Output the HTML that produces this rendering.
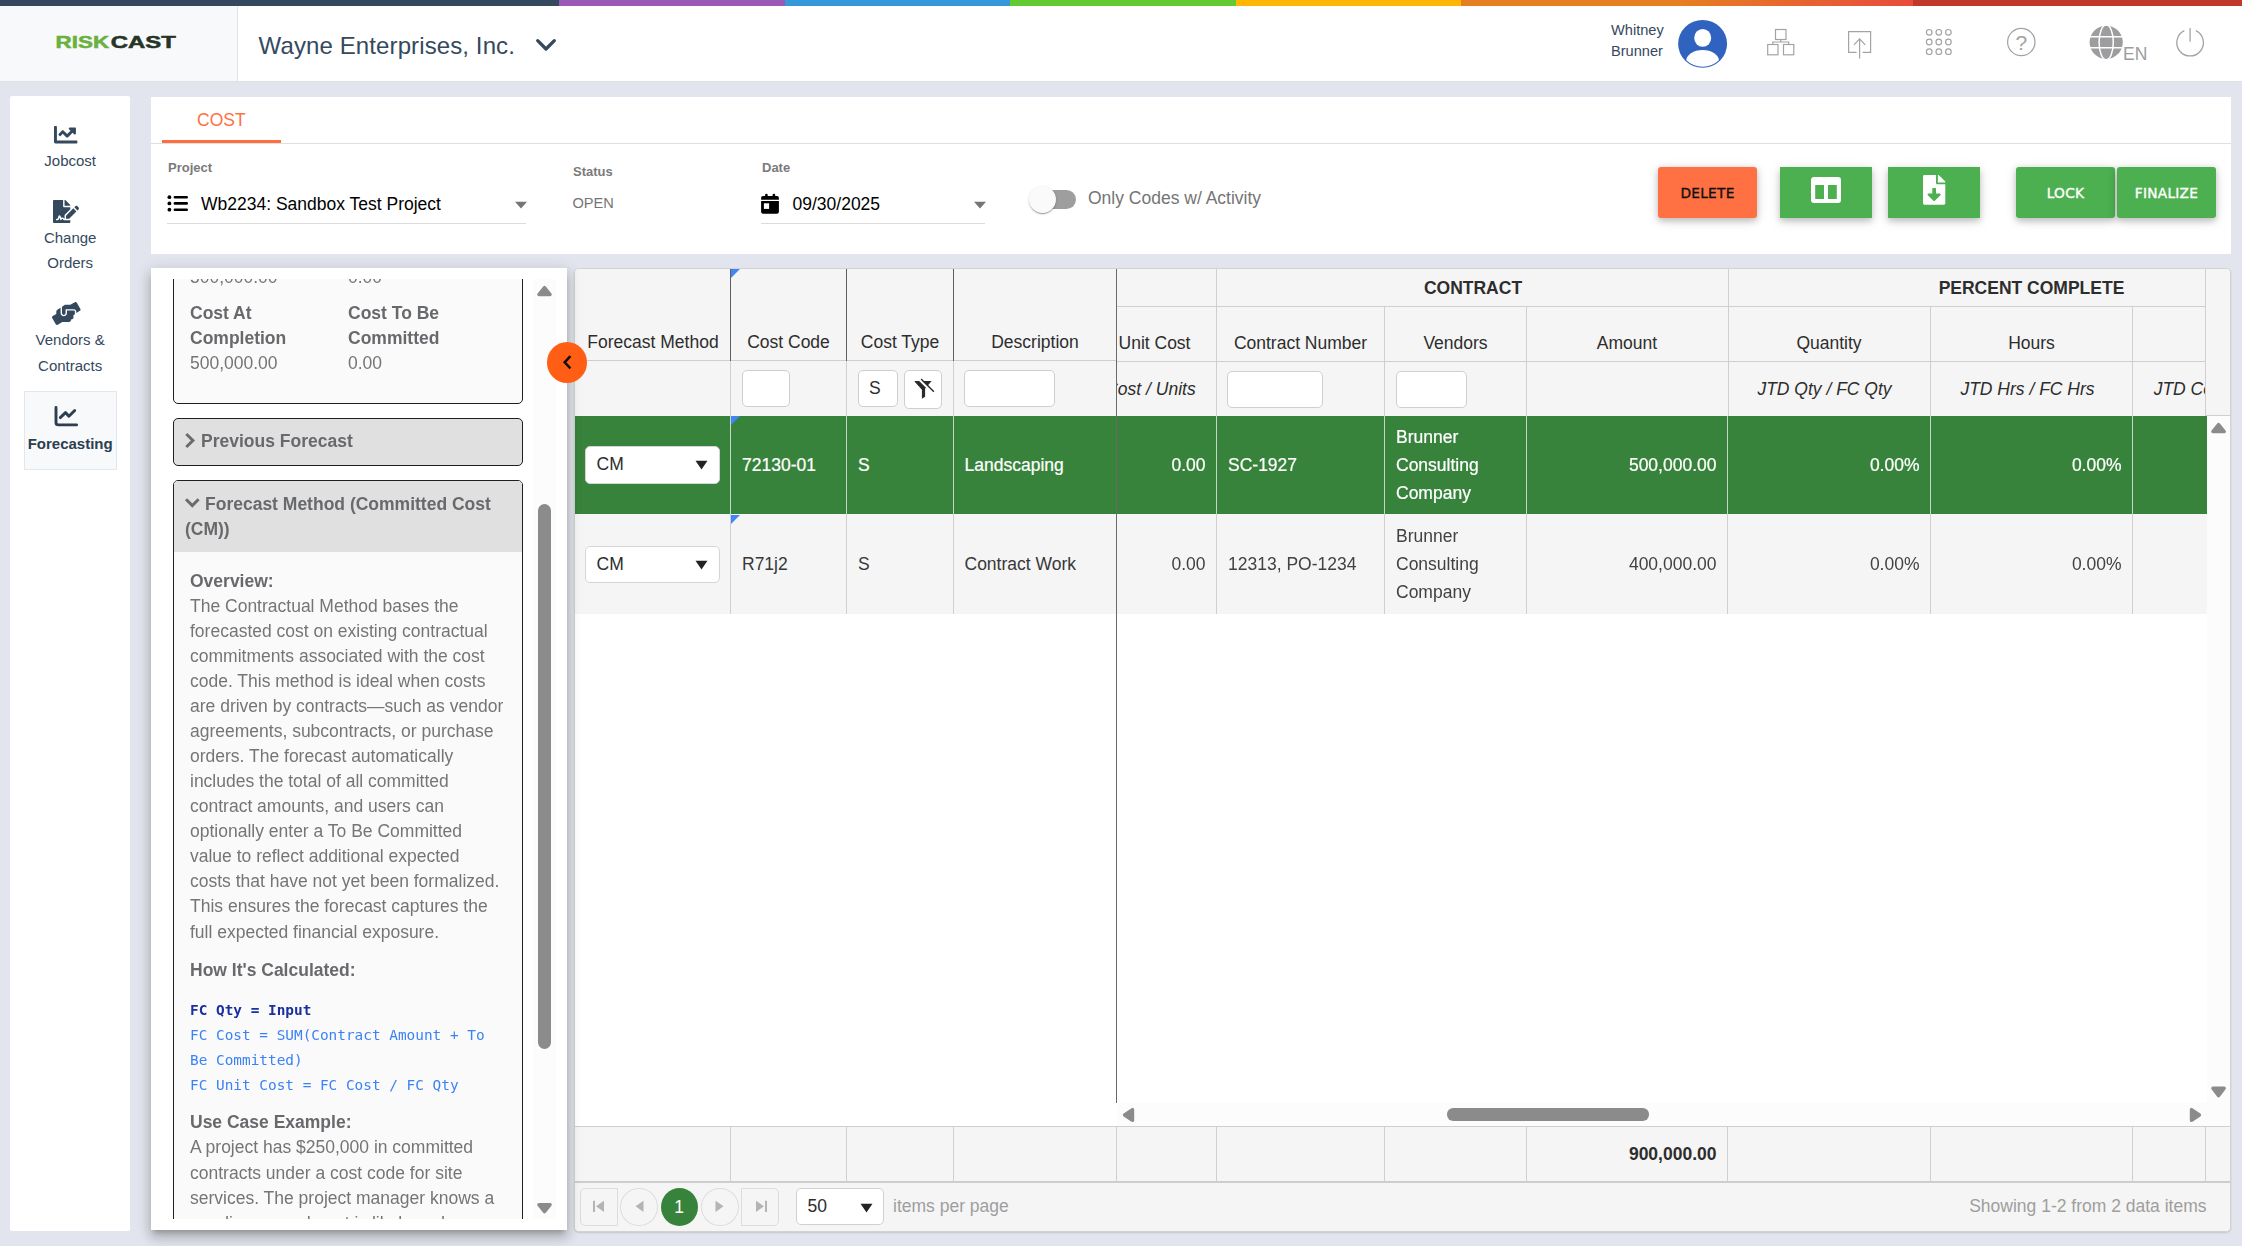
<!DOCTYPE html>
<html lang="en">
<head>
<meta charset="utf-8">
<title>RiskCast - Forecasting</title>
<style>
*{box-sizing:border-box;margin:0;padding:0}
html,body{width:2242px;height:1246px;overflow:hidden}
body{background:#e2e5ed;font-family:"Liberation Sans",sans-serif;font-size:17.5px;color:#212529;position:relative}
.abs{position:absolute}
.t{position:absolute;white-space:nowrap;line-height:1}
svg{position:absolute;overflow:visible}
/* top bar */
#rainbow{left:0;top:0;width:2242px;height:6px;background:linear-gradient(to right,#34495e 0,#34495e 559px,#9b59b6 559px,#9b59b6 785px,#3498db 785px,#3498db 1010px,#62cb31 1010px,#62cb31 1236px,#ffb606 1236px,#ffb606 1461px,#e67e22 1461px,#e67e22 1683px,#e74c3c 1913px,#c0392b 1913px,#c0392b 2242px)}
#header{left:0;top:6px;width:2242px;height:76px;background:#fff;border-bottom:1px solid #e0e1e5}
#logo{left:0;top:6px;width:238px;height:75px;background:#f8f9fb;border-right:1px solid #e1e4ec}
/* sidebar */
#side{left:10px;top:96px;width:120px;height:1135px;background:#fff;border-radius:2px}
.nav{color:#34495e;font-size:15px;text-align:center;left:10.200px;width:120px;line-height:25px}
/* card */
#card{left:151px;top:97px;width:2080px;height:157px;background:#fff}
.lbl{font-size:13px;font-weight:bold;color:#7a7a7a}
.btn{border-radius:3px;box-shadow:0 2.5px 6px rgba(0,0,0,.18),0 2.5px 12px rgba(0,0,0,.13);font-family:"DejaVu Sans","Liberation Sans",sans-serif;font-size:13.75px;text-align:center;line-height:53px;height:51px;top:167px;letter-spacing:.25px;-webkit-text-stroke:.35px currentColor}
.g{background:#4caf50;color:#fff}
</style>
</head>
<body>
<div class="abs" id="rainbow"></div>
<div class="abs" id="header"></div>
<div class="abs" id="logo"></div>
<!--HEADER-->
<svg class="abs" style="left:0;top:0" width="238" height="81" viewBox="0 0 238 81">
<text x="55.600" y="47.900" font-family="Liberation Sans, sans-serif" font-weight="bold" font-size="15.900" textLength="53.5" lengthAdjust="spacingAndGlyphs" fill="#6bb13f" stroke="#6bb13f" stroke-width=".5">RISK</text>
<text x="110.800" y="47.900" font-family="Liberation Sans, sans-serif" font-weight="bold" font-size="15.900" textLength="65" lengthAdjust="spacingAndGlyphs" fill="#263426" stroke="#263426" stroke-width=".5">CAST</text>
</svg>
<div class="t" style="left:258.600px;top:33px;font-size:24px;line-height:26px;color:#34495e;letter-spacing:.11px">Wayne Enterprises, Inc.</div>
<svg style="left:534px;top:36px" width="24" height="18" viewBox="0 0 24 18"><path d="M3.700 4.700 L12 13 L20.300 4.700" fill="none" stroke="#34495e" stroke-width="3.300" stroke-linecap="round" stroke-linejoin="round"/></svg>
<div class="t" style="left:1611px;top:20px;font-size:14.600px;line-height:21px;color:#34495e">Whitney<br>Brunner</div>
<svg style="left:1677px;top:19px" width="51" height="51" viewBox="0 0 51 51">
<defs><clipPath id="av"><ellipse cx="25.600" cy="24.800" rx="23.500" ry="22.900"/></clipPath></defs>
<ellipse cx="25.600" cy="24.800" rx="24.500" ry="23.900" fill="#3063bf"/>
<ellipse cx="25.700" cy="18.900" rx="8.500" ry="8.900" fill="#fff"/>
<ellipse cx="25.600" cy="41.700" rx="16.400" ry="10.600" fill="#fff" clip-path="url(#av)"/>
</svg>
<!-- org icon -->
<svg style="left:1760px;top:20px" width="50" height="50" viewBox="0 0 50 50" fill="none" stroke="#a3a3a3" stroke-width="1.2">
<rect x="15.5" y="9.500" width="10.5" height="10"/>
<rect x="7.700" y="24.500" width="10.300" height="10.300"/>
<rect x="23.500" y="24.500" width="10.300" height="10.300"/>
<path d="M20.800 19.500 V22 M12.800 24.500 V22 H28.700 V24.500"/>
</svg>
<!-- upload icon -->
<svg style="left:1840px;top:20px" width="40" height="50" viewBox="0 0 40 50" fill="none" stroke="#a3a3a3" stroke-width="1.2">
<path d="M16.500 32.300 H8.600 V11.700 H30.600 V32.300 H22.700"/>
<path d="M19.600 38.600 V18.800 M14 24.800 L19.600 18.800 L25.200 24.800"/>
</svg>
<!-- apps icon -->
<svg style="left:1910px;top:20px" width="60" height="50" viewBox="0 0 60 50" fill="none" stroke="#a3a3a3" stroke-width="1.2">
<circle cx="19.200" cy="12.300" r="2.800"/><circle cx="28.800" cy="12.300" r="2.800"/><circle cx="38.400" cy="12.300" r="2.800"/>
<circle cx="19.200" cy="22" r="2.800"/><circle cx="28.800" cy="22" r="2.800"/><circle cx="38.400" cy="22" r="2.800"/>
<circle cx="19.200" cy="31.700" r="2.800"/><circle cx="28.800" cy="31.700" r="2.800"/><circle cx="38.400" cy="31.700" r="2.800"/>
</svg>
<!-- help icon -->
<svg style="left:2000px;top:20px" width="44" height="50" viewBox="0 0 44 50">
<circle cx="21.300" cy="22" r="13.700" fill="none" stroke="#a3a3a3" stroke-width="1.200"/>
<text x="21.300" y="29.700" text-anchor="middle" font-family="Liberation Sans, sans-serif" font-size="21" fill="#a3a3a3">?</text>
</svg>
<!-- globe -->
<svg style="left:2080px;top:20px" width="70" height="50" viewBox="0 0 70 50">
<circle cx="26.200" cy="22.300" r="16.600" fill="#9d9da0"/>
<g fill="none" stroke="#fff" stroke-width="1.500">
<path d="M8 16.800 H45 M8 27.700 H45"/>
<ellipse cx="26.200" cy="22.300" rx="7.100" ry="17.500"/>
</g>
<text x="43" y="39.600" font-family="Liberation Sans, sans-serif" font-size="17.5" fill="#9d9da0">EN</text>
</svg>
<!-- power -->
<svg style="left:2170px;top:20px" width="44" height="50" viewBox="0 0 44 50" fill="none" stroke="#a3a3a3" stroke-width="1.300">
<path d="M14.300 10.700 A13.300 13.300 0 1 0 25.900 10.700"/>
<path d="M20.100 8 V21.700"/>
</svg>
<!--/HEADER-->
<div class="abs" id="side"></div>
<!--SIDE-->
<svg style="left:54.4px;top:122.600px" width="23.4" height="23.4" viewBox="0 0 512 512"><path fill="#34495e" d="M496 384H64V80c0-8.840-7.160-16-16-16H16C7.160 64 0 71.160 0 80v336c0 17.670 14.330 32 32 32h464c8.840 0 16-7.160 16-16v-32c0-8.840-7.160-16-16-16zM464 96H345.940c-21.380 0-32.090 25.850-16.970 40.970l32.400 32.400L288 242.750l-73.370-73.370c-12.500-12.500-32.760-12.500-45.250 0l-68.690 68.690c-6.250 6.250-6.250 16.380 0 22.630l22.620 22.620c6.250 6.250 16.380 6.250 22.630 0L192 237.250l73.370 73.370c12.500 12.500 32.760 12.500 45.250 0l96-96 32.400 32.400c15.120 15.120 40.970 4.410 40.970-16.970V112c.010-8.840-7.150-16-15.990-16z"/></svg>
<div class="t nav" style="top:148px">Jobcost</div>
<svg style="left:53px;top:200.2px" width="26" height="23.100" viewBox="0 0 576 512"><path fill="#34495e" d="M218.170 424.140c-2.950-5.920-8.090-6.520-10.170-6.520s-7.220.590-10.020 6.190l-7.670 15.340c-6.370 12.780-25.030 11.370-29.480-2.090L144 386.590l-10.610 31.880c-5.890 17.660-22.380 29.530-41 29.530H80c-8.840 0-16-7.160-16-16s7.160-16 16-16h12.390c4.830 0 9.110-3.080 10.640-7.660l18.190-54.640c3.300-9.810 12.440-16.410 22.780-16.410s19.480 6.590 22.770 16.410l13.880 41.640c19.750-16.190 54.060-9.700 66 14.160 1.890 3.780 5.490 5.950 9.360 6.260v-82.120l128-127.090V160H248c-13.200 0-24-10.800-24-24V0H24C10.700 0 0 10.700 0 24v464c0 13.300 10.700 24 24 24h336c13.300 0 24-10.700 24-24v-40l-128-.110c-16.120-.310-30.580-9.280-37.830-23.750zM384 121.900c0-6.300-2.500-12.400-7-16.900L279.100 7c-4.500-4.500-10.600-7-17-7H256v128h128v-6.100zm-96 225.060V416h68.990l161.680-162.780-67.880-67.880L288 346.960zm280.540-179.630l-31.870-31.870c-9.940-9.940-26.070-9.940-36.010 0l-27.250 27.250 67.880 67.880 27.250-27.250c9.950-9.940 9.950-26.070 0-36.010z"/></svg>
<div class="t nav" style="top:225px">Change<br>Orders</div>
<svg style="left:52px;top:301.600px" width="28.600" height="22.900" viewBox="0 0 640 512"><path fill="#34495e" d="M488 192H336v56c0 39.700-32.300 72-72 72s-72-32.300-72-72V126.400l-64.900 39C107.800 176.900 96 197.800 96 220.200v47.300l-80 46.200C.7 322.500-4.600 342.100 4.300 357.400l80 138.600c8.800 15.300 28.400 20.500 43.700 11.700L231.400 448H368c35.300 0 64-28.700 64-64h16c17.700 0 32-14.300 32-32v-64h8c13.300 0 24-10.700 24-24v-48c0-13.300-10.700-24-24-24zm147.700-37.400L555.700 16C546.900.7 527.300-4.500 512 4.300L408.600 64H306.400c-12 0-23.700 3.400-33.900 9.700L239 94.600c-9.400 5.800-15 16.100-15 27.100V248c0 22.100 17.900 40 40 40s40-17.900 40-40v-88h184c30.900 0 56 25.100 56 56v28.500l80-46.200c15.300-8.900 20.500-28.400 11.700-43.700z"/></svg>
<div class="t nav" style="top:327px;line-height:26px">Vendors &amp;<br>Contracts</div>
<div class="abs" style="left:24px;top:391px;width:93px;height:79px;background:#f8f9fb;border:1px solid #e3e6ec"></div>
<svg style="left:48px;top:400px" width="40" height="32" viewBox="0 0 40 32" fill="none" stroke="#2c3e50" stroke-width="2.900" stroke-linecap="round" stroke-linejoin="round">
<path d="M8 7.400 V22.500 Q8 24.900 10.400 24.900 H28.600"/>
<path d="M12.300 17.600 L17.500 12.600 L20.900 16.300 L26.700 10.500"/>
</svg>
<div class="t nav" style="top:431px;font-weight:bold;color:#2c3e50">Forecasting</div>

<!--/SIDE-->
<div class="abs" id="card"></div>
<!--CARD-->
<div class="t" style="left:197px;top:111px;font-size:17.5px;line-height:18px;color:#ff7043">COST</div>
<div class="abs" style="left:151px;top:143px;width:2080px;height:1px;background:#e0e0e0"></div>
<div class="abs" style="left:162px;top:140px;width:119px;height:3px;background:#ff6e40"></div>
<div class="t lbl" style="left:168px;top:160.500px;line-height:14px">Project</div>
<svg style="left:160px;top:185px" width="40" height="35" viewBox="0 0 40 35">
<g fill="#000"><circle cx="9.400" cy="12.200" r="1.900"/><circle cx="9.400" cy="18.400" r="1.900"/><circle cx="9.400" cy="24.700" r="1.900"/></g>
<path d="M14.900 12.200 H26.700 M14.900 18.400 H26.700 M14.900 24.700 H26.700" stroke="#000" stroke-width="2.600" stroke-linecap="round" fill="none"/>
</svg>
<div class="t" style="left:201px;top:194px;font-size:17.5px;line-height:20px;color:#000">Wb2234: Sandbox Test Project</div>
<svg style="left:514px;top:201px" width="14" height="8" viewBox="0 0 14 8"><path d="M1 .7 H13 L7 7.500 Z" fill="#757575"/></svg>
<div class="abs" style="left:167px;top:223px;width:359px;height:1px;background:#dcdcdc"></div>
<div class="t lbl" style="left:573px;top:165px;line-height:14px">Status</div>
<div class="t" style="left:572.500px;top:194px;font-size:14.600px;line-height:18px;color:#757575">OPEN</div>
<div class="t lbl" style="left:762px;top:160.500px;line-height:14px">Date</div>
<svg style="left:750px;top:185px" width="50" height="35" viewBox="0 0 50 35">
<path fill="#000" d="M11.100 12.900 Q11.100 11 13 11 H27 Q28.900 11 28.900 12.900 V14.700 H11.100 Z M11.100 16 H28.900 V26.800 Q28.900 28.800 26.900 28.800 H13.100 Q11.100 28.800 11.100 26.800 Z"/>
<rect x="15.100" y="8.700" width="2.600" height="4" rx="1.200" fill="#000"/><rect x="22.600" y="8.700" width="2.600" height="4" rx="1.200" fill="#000"/>
<rect x="13.900" y="18.300" width="5.200" height="5.600" fill="#fff"/>
</svg>
<div class="t" style="left:792.5px;top:194px;font-size:17.5px;line-height:20px;color:#000">09/30/2025</div>
<svg style="left:973px;top:201px" width="14" height="8" viewBox="0 0 14 8"><path d="M1 .7 H13 L7 7.500 Z" fill="#757575"/></svg>
<div class="abs" style="left:761px;top:223px;width:224px;height:1px;background:#dcdcdc"></div>
<div class="abs" style="left:1034px;top:190px;width:42px;height:19px;border-radius:10px;background:#9e9e9e"></div>
<div class="abs" style="left:1029px;top:186px;width:27px;height:27px;border-radius:50%;background:#fafafa;box-shadow:0 2px 1px -1px rgba(0,0,0,.2),0 1px 1px rgba(0,0,0,.14),0 1px 3px rgba(0,0,0,.14)"></div>
<div class="t" style="left:1088px;top:188px;font-size:17.5px;line-height:20px;color:#757575">Only Codes w/ Activity</div>
<div class="abs btn" style="left:1658px;width:99px;background:#ff7043;color:#111">DELETE</div>
<div class="abs btn g" style="left:1780px;width:92px;border-radius:0"></div>
<svg style="left:1811px;top:177px" width="30" height="26" viewBox="0 0 30 26"><path fill="#fff" fill-rule="evenodd" d="M3 0 H27 Q30 0 30 3 V23 Q30 26 27 26 H3 Q0 26 0 23 V3 Q0 0 3 0 Z M4.200 8 V22 H13 V8 Z M17 8 V22 H25.800 V8 Z"/></svg>
<div class="abs btn g" style="left:1888px;width:92px;border-radius:0"></div>
<svg style="left:1922.800px;top:175.200px" width="22.300" height="29.700" viewBox="0 0 384 512"><path fill="#fff" d="M224 136V0H24C10.700 0 0 10.700 0 24v464c0 13.300 10.700 24 24 24h336c13.300 0 24-10.700 24-24V160H248c-13.200 0-24-10.800-24-24zm76.450 211.360l-96.420 95.700c-6.650 6.610-17.390 6.610-24.040 0l-96.420-95.700C73.420 337.290 80.540 320 94.820 320H160v-80c0-8.840 7.160-16 16-16h32c8.840 0 16 7.160 16 16v80h65.180c14.280 0 21.400 17.290 11.270 27.360zM377 105L279.100 7c-4.500-4.500-10.600-7-17-7H256v128h128v-6.100c0-6.300-2.500-12.400-7-16.900z"/></svg>
<div class="abs btn g" style="left:2016px;width:99px">LOCK</div>
<div class="abs btn g" style="left:2117px;width:99px">FINALIZE</div>

<!--/CARD-->
<!--PANEL-->
<style>
#panel{left:151px;top:268px;width:416px;height:962px;background:#fff;z-index:5;box-shadow:0 5px 5px -3px rgba(0,0,0,.2),0 8px 10px 1px rgba(0,0,0,.14),0 3px 14px 2px rgba(0,0,0,.12)}
#pscroll{left:0;top:11px;width:416px;height:940px;overflow:hidden;will-change:transform}
#ptrack{left:382px;top:0;width:23px;height:940px;background:#fcfcfc}
.pbox{position:absolute;left:22px;width:350px;border:1px solid #1f1f1f;border-radius:5px;background:#fafafa;overflow:hidden}
.pt{position:absolute;white-space:nowrap;font-size:17.5px;line-height:25px;color:#757575}
.pb{font-weight:bold;color:#68696c}
.code{font-family:"DejaVu Sans Mono","Liberation Mono",monospace;font-size:14.400px;color:#3b82f6}
</style>
<div class="abs" id="panel">
<div class="abs" id="pscroll">
<div class="abs" id="ptrack"></div>
<div class="abs" style="left:387.300px;top:225px;width:12.900px;height:545px;border-radius:6.500px;background:#8b8b8b"></div>
<div class="pbox" style="top:-100px;height:225px"></div>
<div class="pt" style="left:39px;top:-14.500px">500,000.00</div>
<div class="pt" style="left:197px;top:-14.500px">0.00</div>
<div class="pt pb" style="left:39px;top:22px">Cost At<br>Completion</div>
<div class="pt pb" style="left:197px;top:22px">Cost To Be<br>Committed</div>
<div class="pt" style="left:39px;top:72px">500,000.00</div>
<div class="pt" style="left:197px;top:72px">0.00</div>
<div class="pbox" style="top:139px;height:48px;background:#e0e0e0"></div>

<div class="pt pb" style="left:50px;top:150px">Previous Forecast</div>
<div class="pbox" style="top:201px;height:900px"><div class="abs" style="left:0;top:0;width:350px;height:71px;background:#e0e0e0"></div></div>

<div class="pt pb" style="left:34px;top:213px;white-space:normal;width:335px"><span style="padding-left:20px">Forecast Method (Committed Cost</span><br>(CM))</div>
<div class="pt pb" style="left:39px;top:290px">Overview:</div>
<div class="pt" style="left:39px;top:315px">The Contractual Method bases the<br>forecasted cost on existing contractual<br>commitments associated with the cost<br>code. This method is ideal when costs<br>are driven by contracts—such as vendor<br>agreements, subcontracts, or purchase<br>orders. The forecast automatically<br>includes the total of all committed<br>contract amounts, and users can<br>optionally enter a To Be Committed<br>value to reflect additional expected<br>costs that have not yet been formalized.<br>This ensures the forecast captures the</div>
<div class="pt" style="left:39px;top:641px">full expected financial exposure.</div>
<div class="pt pb" style="left:39px;top:679px">How It's Calculated:</div>
<div class="pt code" style="left:39px;top:718.600px;font-weight:bold;color:#1a2fa0">FC Qty = Input</div>
<div class="pt code" style="left:39px;top:743.600px">FC Cost = SUM(Contract Amount + To<br>Be Committed)<br>FC Unit Cost = FC Cost / FC Qty</div>
<div class="pt pb" style="left:39px;top:831px">Use Case Example:</div>
<div class="pt" style="left:39px;top:856px">A project has $250,000 in committed</div>
<div class="pt" style="left:39px;top:882px">contracts under a cost code for site<br>services. The project manager knows a<br>pending amendment is likely and</div>
<svg style="left:0;top:0" width="60" height="240" viewBox="0 0 60 240"><path d="M35.300 155 L41.900 161.500 L35.300 168" fill="none" stroke="#6a6b6f" stroke-width="3"/><path d="M35 220.300 L41.300 226.600 L47.600 220.300" fill="none" stroke="#6a6b6f" stroke-width="3"/></svg>
</div>
</div>
</div>
<svg style="z-index:6;left:535px;top:283px" width="20" height="16"><path d="M9.50 4.50 L15.10 11.50 L3.90 11.50 Z" fill="#8b8b8b" stroke="#8b8b8b" stroke-width="3.4" stroke-linejoin="round"/></svg>
<svg style="z-index:6;left:535px;top:1201px" width="20" height="16"><path d="M9.50 10.70 L15.10 3.70 L3.90 3.70 Z" fill="#8b8b8b" stroke="#8b8b8b" stroke-width="3.4" stroke-linejoin="round"/></svg>

<!--/PANEL-->
<!--GRID-->
<style>
#grid{left:574px;top:268px;width:1657px;height:964px;background:#fff;border:1px solid #d2d2d2;border-radius:5px;box-shadow:0 1px 2px rgba(0,0,0,.14)}
.gh{position:absolute;background:#f5f5f5}
.vl{position:absolute;width:1px;background:#cfcfcf}
.vd{position:absolute;width:1px;background:#5f5f5f}
.hl{position:absolute;height:1px;background:#cfcfcf}
.c{position:absolute;white-space:nowrap;font-size:17.5px;line-height:28px;color:#2d2d2d}
.ctr{text-align:center}
.rt{text-align:right}
.w{color:#fff}
.it{font-style:italic}
.gs{will-change:transform;color:#424242}
.lk{color:#383838}
.w.gs,.w.lk{color:#fff;-webkit-text-stroke:.22px #fff}
.fi{position:absolute;background:#fff;border:1px solid #cfcfcf;border-radius:5px}
.tri{position:absolute;width:0;height:0;border-top:9px solid #4285f4;border-right:9px solid transparent}
.pg{position:absolute;border:1px solid #dcdcdc;background:#f5f5f5}
</style>
<div class="abs" id="grid"></div>
<div class="gh" style="left:575px;top:269px;width:1655px;height:147px;border-radius:4px 4px 0 0"></div>
<div class="abs" style="left:575px;top:416px;width:1632px;height:98px;background:#38833c"></div>
<div class="abs" style="left:575px;top:514px;width:1632px;height:100px;background:#f5f5f5"></div>
<div class="abs" style="left:2207px;top:416px;width:23px;height:688px;background:#fcfcfc"></div>
<div class="abs" style="left:1117px;top:1103px;width:1113px;height:24px;background:#fcfcfc"></div>
<div class="gh" style="left:575px;top:1127px;width:1655px;height:55px;"></div>
<div class="hl" style="left:575px;top:1126px;width:1655px;height:1px;"></div>
<div class="hl" style="left:575px;top:1181px;width:1655px;height:2px;background:#cdcdcd"></div>
<div class="gh" style="left:575px;top:1183px;width:1655px;height:48px;border-radius:0 0 4px 4px"></div>
<div class="hl" style="left:575px;top:360px;width:542px;height:1px;"></div>
<div class="hl" style="left:1117px;top:306px;width:1089px;height:1px;"></div>
<div class="hl" style="left:1117px;top:361px;width:1089px;height:1px;"></div>
<div class="hl" style="left:2206px;top:415px;width:25px;height:1px;"></div>
<div class="vd" style="left:730px;top:269px;width:1px;height:92px;"></div>
<div class="vl" style="left:730px;top:361px;width:1px;height:55px;"></div>
<div class="vl" style="left:730px;top:416px;width:1px;height:98px;background:#c4d6c5"></div>
<div class="vl" style="left:730px;top:514px;width:1px;height:100px;"></div>
<div class="vl" style="left:730px;top:1127px;width:1px;height:55px;"></div>
<div class="vd" style="left:846px;top:269px;width:1px;height:92px;"></div>
<div class="vl" style="left:846px;top:361px;width:1px;height:55px;"></div>
<div class="vl" style="left:846px;top:416px;width:1px;height:98px;background:#c4d6c5"></div>
<div class="vl" style="left:846px;top:514px;width:1px;height:100px;"></div>
<div class="vl" style="left:846px;top:1127px;width:1px;height:55px;"></div>
<div class="vd" style="left:953px;top:269px;width:1px;height:92px;"></div>
<div class="vl" style="left:953px;top:361px;width:1px;height:55px;"></div>
<div class="vl" style="left:953px;top:416px;width:1px;height:98px;background:#c4d6c5"></div>
<div class="vl" style="left:953px;top:514px;width:1px;height:100px;"></div>
<div class="vl" style="left:953px;top:1127px;width:1px;height:55px;"></div>
<div class="vd" style="left:1116px;top:269px;width:1px;height:834px;background:#6a6a6a"></div>
<div class="vl" style="left:1116px;top:1127px;width:1px;height:55px;"></div>
<div class="vl" style="left:1216px;top:269px;width:1px;height:147px;"></div>
<div class="vl" style="left:1216px;top:416px;width:1px;height:98px;background:#c4d6c5"></div>
<div class="vl" style="left:1216px;top:514px;width:1px;height:100px;"></div>
<div class="vl" style="left:1216px;top:1127px;width:1px;height:55px;"></div>
<div class="vl" style="left:1384px;top:307px;width:1px;height:109px;"></div>
<div class="vl" style="left:1384px;top:416px;width:1px;height:98px;background:#c4d6c5"></div>
<div class="vl" style="left:1384px;top:514px;width:1px;height:100px;"></div>
<div class="vl" style="left:1384px;top:1127px;width:1px;height:55px;"></div>
<div class="vl" style="left:1526px;top:307px;width:1px;height:109px;"></div>
<div class="vl" style="left:1526px;top:416px;width:1px;height:98px;background:#c4d6c5"></div>
<div class="vl" style="left:1526px;top:514px;width:1px;height:100px;"></div>
<div class="vl" style="left:1526px;top:1127px;width:1px;height:55px;"></div>
<div class="vl" style="left:1728px;top:269px;width:1px;height:147px;"></div>
<div class="vl" style="left:1727px;top:416px;width:1px;height:98px;background:#c4d6c5"></div>
<div class="vl" style="left:1727px;top:514px;width:1px;height:100px;"></div>
<div class="vl" style="left:1727px;top:1127px;width:1px;height:55px;"></div>
<div class="vl" style="left:1930px;top:307px;width:1px;height:109px;"></div>
<div class="vl" style="left:1930px;top:416px;width:1px;height:98px;background:#c4d6c5"></div>
<div class="vl" style="left:1930px;top:514px;width:1px;height:100px;"></div>
<div class="vl" style="left:1930px;top:1127px;width:1px;height:55px;"></div>
<div class="vl" style="left:2132px;top:307px;width:1px;height:109px;"></div>
<div class="vl" style="left:2132px;top:416px;width:1px;height:98px;background:#c4d6c5"></div>
<div class="vl" style="left:2132px;top:514px;width:1px;height:100px;"></div>
<div class="vl" style="left:2132px;top:1127px;width:1px;height:55px;"></div>
<div class="vl" style="left:2205px;top:269px;width:1px;height:147px;"></div>
<div class="vl" style="left:2205px;top:1127px;width:1px;height:55px;"></div>
<div class="tri" style="left:731px;top:269px"></div>
<div class="tri" style="left:731px;top:416px"></div>
<div class="tri" style="left:731px;top:515px"></div>
<div class="c ctr" style="left:576px;top:328px;width:154px;">Forecast Method</div>
<div class="c ctr" style="left:731px;top:328px;width:115px;">Cost Code</div>
<div class="c ctr" style="left:847px;top:328px;width:106px;">Cost Type</div>
<div class="c ctr" style="left:954px;top:328px;width:162px;">Description</div>
<div class="abs" style="left:1117px;top:269px;width:1088px;height:147px;overflow:hidden">
<div class="c ctr" style="left:-23.5px;top:60px;width:122px;">Unit Cost</div>
<div class="c ctr" style="left:100px;top:60px;width:167px;">Contract Number</div>
<div class="c ctr" style="left:268px;top:60px;width:141px;">Vendors</div>
<div class="c ctr" style="left:410px;top:60px;width:200px;">Amount</div>
<div class="c ctr" style="left:611px;top:60px;width:202px;">Quantity</div>
<div class="c ctr" style="left:814px;top:60px;width:201px;">Hours</div>
<div class="c ctr" style="left:1016px;top:60px;width:202px;">Cost</div>
<div class="c ctr" style="left:101px;top:5px;width:510px;font-weight:bold">CONTRACT</div>
<div class="c ctr" style="left:611px;top:5px;width:607px;font-weight:bold">PERCENT COMPLETE</div>
<div class="c it" style="left:-40px;top:106px;width:122px;">FC Cost / Units</div>
<div class="c ctr it" style="left:611px;top:106px;width:193px;">JTD Qty / FC Qty</div>
<div class="c ctr it" style="left:814px;top:106px;width:193px;">JTD Hrs / FC Hrs</div>
<div class="c ctr it" style="left:1016px;top:106px;width:193px;">JTD Cost / FC Cost</div>
</div>
<div class="fi" style="left:742px;top:370px;width:48px;height:37px;"></div>
<div class="fi" style="left:858px;top:370px;width:40px;height:37px;"><div class="c" style="left:10px;top:3px">S</div></div>
<div class="fi" style="left:904px;top:370px;width:38px;height:39px;"></div>
<svg style="left:904px;top:370px" width="38" height="39" viewBox="0 0 38 39"><path d="M10.700 11.100 H27.600 L21.100 18.700 V26.800 L17.900 28.700 V19.800 L10.700 11.700 Z" fill="#2b2b2b"/><path d="M14.700 8.900 L28 22" stroke="#fff" stroke-width="2.400" fill="none"/><path d="M17.100 9.100 L29.900 21.700" stroke="#2b2b2b" stroke-width="1.400" fill="none"/></svg>
<div class="fi" style="left:964px;top:370px;width:91px;height:37px;"></div>
<div class="fi" style="left:1227px;top:371px;width:96px;height:37px;"></div>
<div class="fi" style="left:1396px;top:371px;width:71px;height:37px;"></div>
<div class="fi" style="left:585px;top:446px;width:135px;height:38px;border-color:#d5d5d5"><div class="c" style="left:10.500px;top:2.500px">CM</div><svg style="left:109px;top:13.300px" width="13" height="10" viewBox="0 0 13 10"><path d="M.5 .8 H12.500 L6.500 9.600 Z" fill="#222"/></svg></div>
<div class="fi" style="left:585px;top:546px;width:135px;height:36.5px;border-color:#d5d5d5"><div class="c" style="left:10.500px;top:2.500px">CM</div><svg style="left:109px;top:13.300px" width="13" height="10" viewBox="0 0 13 10"><path d="M.5 .8 H12.500 L6.500 9.600 Z" fill="#222"/></svg></div>
<div class="c w lk" style="left:742px;top:451px;width:100px;">72130-01</div>
<div class="c w lk" style="left:858px;top:451px;width:90px;">S</div>
<div class="c w lk" style="left:964.5px;top:451px;width:150px;">Landscaping</div>
<div class="c w gs rt" style="left:1117px;top:451px;width:88.5px;">0.00</div>
<div class="c w gs" style="left:1227.5px;top:451px;width:150px;">SC-1927</div>
<div class="c w gs" style="left:1396px;top:423px;width:130px;">Brunner<br>Consulting<br>Company</div>
<div class="c w gs rt" style="left:1527px;top:451px;width:189.5px;">500,000.00</div>
<div class="c w gs rt" style="left:1728px;top:451px;width:191.5px;">0.00%</div>
<div class="c w gs rt" style="left:1931px;top:451px;width:190.5px;">0.00%</div>
<div class="c  lk" style="left:742px;top:550px;width:100px;">R71j2</div>
<div class="c  lk" style="left:858px;top:550px;width:90px;">S</div>
<div class="c  lk" style="left:964.5px;top:550px;width:150px;">Contract Work</div>
<div class="c  gs rt" style="left:1117px;top:550px;width:88.5px;">0.00</div>
<div class="c  gs" style="left:1227.5px;top:550px;width:150px;">12313, PO-1234</div>
<div class="c  gs" style="left:1396px;top:522px;width:130px;">Brunner<br>Consulting<br>Company</div>
<div class="c  gs rt" style="left:1527px;top:550px;width:189.5px;">400,000.00</div>
<div class="c  gs rt" style="left:1728px;top:550px;width:191.5px;">0.00%</div>
<div class="c  gs rt" style="left:1931px;top:550px;width:190.5px;">0.00%</div>
<div class="c rt" style="left:1527px;top:1140px;width:189.5px;font-weight:bold">900,000.00</div>
<svg style="left:2209px;top:420px" width="20" height="16"><path d="M9.55 4.50 L15.20 11.60 L3.90 11.60 Z" fill="#8b8b8b" stroke="#8b8b8b" stroke-width="3.4" stroke-linejoin="round"/></svg>
<svg style="left:2209px;top:1084px" width="20" height="16"><path d="M9.55 11.60 L15.20 4.30 L3.90 4.30 Z" fill="#8b8b8b" stroke="#8b8b8b" stroke-width="3.4" stroke-linejoin="round"/></svg>
<svg style="left:1120px;top:1105px" width="17" height="20"><path d="M4.60 10.00 L12.50 4.60 L12.50 15.40 Z" fill="#8b8b8b" stroke="#8b8b8b" stroke-width="3.4" stroke-linejoin="round"/></svg>
<svg style="left:2187px;top:1105px" width="17" height="20"><path d="M12.40 10.00 L4.50 4.60 L4.50 15.40 Z" fill="#8b8b8b" stroke="#8b8b8b" stroke-width="3.4" stroke-linejoin="round"/></svg>
<div class="abs" style="left:1447px;top:1108px;width:202px;height:12.5px;border-radius:6.250px;background:#8b8b8b"></div>
<div class="pg" style="left:580px;top:1188px;width:38px;height:38px;border-radius:5px 0 0 5px"></div>
<div class="pg" style="left:620px;top:1188px;width:37.5px;height:38px;border-radius:50%"></div>
<div class="abs" style="left:660.5px;top:1187.5px;width:37px;height:38px;border-radius:50%;background:#38833c;color:#fff;text-align:center;line-height:38.500px;font-size:17.5px">1</div>
<div class="pg" style="left:701px;top:1188px;width:37.5px;height:38px;border-radius:50%"></div>
<div class="pg" style="left:741px;top:1188px;width:38px;height:38px;border-radius:0 5px 5px 0"></div>
<svg style="left:580px;top:1188px" width="200" height="37" viewBox="0 0 200 37" fill="#b4b4b4"><path d="M13 12.700 H15 V24 H13 Z M24 12.700 V24 L16 18.350 Z"/><path d="M63.500 12.700 V24 L55.500 18.350 Z"/><path d="M135.500 12.700 V24 L143.500 18.350 Z"/><path d="M176 12.700 V24 L184 18.350 Z M185 12.700 H187 V24 H185 Z"/></svg>
<div class="fi" style="left:796px;top:1188px;width:88px;height:37px;border-color:#d0d0d0"><div class="c" style="left:10.500px;top:3px">50</div><svg style="left:63px;top:14px" width="13" height="10" viewBox="0 0 13 10"><path d="M.5 .8 H12.500 L6.500 9.600 Z" fill="#222"/></svg></div>
<div class="c " style="left:893px;top:1192px;width:200px;color:#9e9e9e">items per page</div>
<div class="c rt" style="left:1900px;top:1192px;width:306.5px;color:#9e9e9e">Showing 1-2 from 2 data items</div>
<div class="abs" style="left:547px;top:342px;width:40px;height:40.7px;border-radius:50%;background:#ff5e14;z-index:7"></div>
<svg style="z-index:8;left:547px;top:342px" width="40" height="40" viewBox="0 0 40 40"><path d="M23.400 14.200 L17.700 20.300 L23.400 26.400" fill="none" stroke="#111" stroke-width="2.500"/></svg>
<!--/GRID-->
</body>
</html>
